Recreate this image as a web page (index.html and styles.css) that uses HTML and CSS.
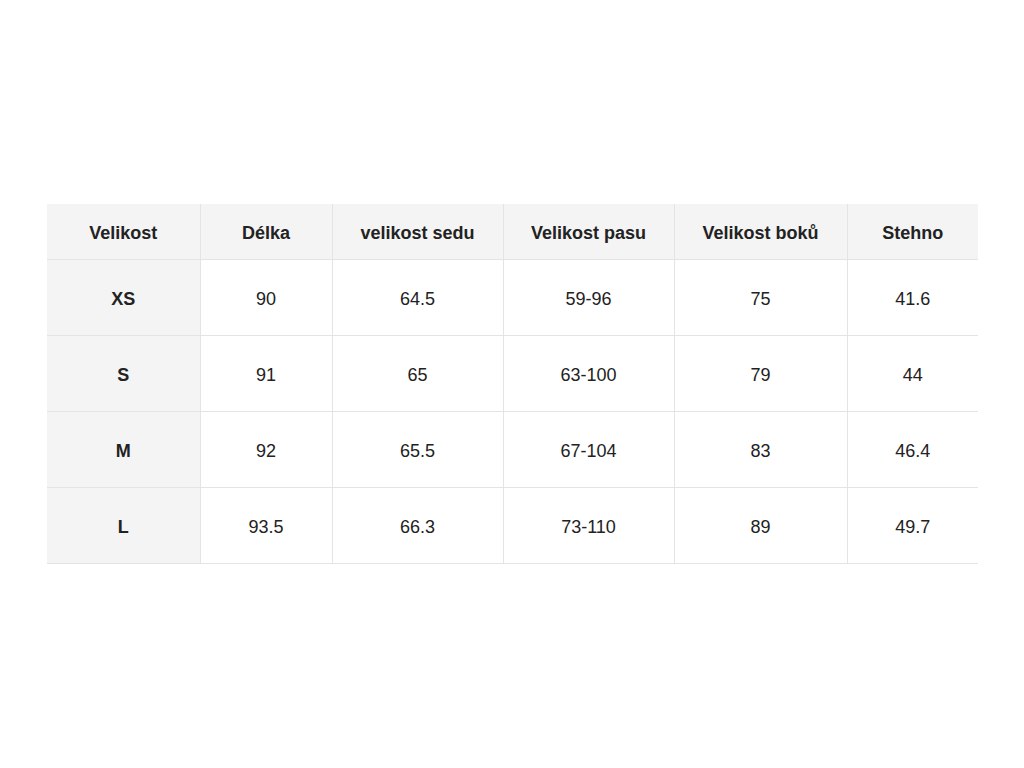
FILE: index.html
```html
<!DOCTYPE html>
<html lang="cs">
<head>
<meta charset="utf-8">
<title>Tabulka velikostí</title>
<link rel="stylesheet" href="styles.css">
</head>
<body>
<main class="page">
  <table class="sizes">
    <colgroup>
      <col class="c1"><col class="c2"><col class="c3"><col class="c4"><col class="c5"><col class="c6">
    </colgroup>
    <thead>
      <tr class="head-row">
        <th>Velikost</th><th>Délka</th><th>velikost sedu</th><th>Velikost pasu</th><th>Velikost boků</th><th>Stehno</th>
      </tr>
    </thead>
    <tbody>
      <tr class="body-row"><th>XS</th><td>90</td><td>64.5</td><td>59-96</td><td>75</td><td>41.6</td></tr>
      <tr class="body-row"><th>S</th><td>91</td><td>65</td><td>63-100</td><td>79</td><td>44</td></tr>
      <tr class="body-row"><th>M</th><td>92</td><td>65.5</td><td>67-104</td><td>83</td><td>46.4</td></tr>
      <tr class="body-row"><th>L</th><td>93.5</td><td>66.3</td><td>73-110</td><td>89</td><td>49.7</td></tr>
    </tbody>
  </table>
</main>
</body>
</html>
```
FILE: styles.css
```css
html, body {
  margin: 0;
  padding: 0;
  background: #ffffff;
}
body {
  font-family: "Liberation Sans", Arial, sans-serif;
  color: #222222;
}
.page {
  height: 768px;
  display: flex;
  align-items: center;
  justify-content: center;
}
.sizes {
  width: 931px;
  border-collapse: collapse;
  table-layout: fixed;
  font-size: 18px;
  margin-left: 1px;
}
.c1 { width: 153px; }
.c2 { width: 132px; }
.c3 { width: 171px; }
.c4 { width: 171px; }
.c5 { width: 173px; }
.c6 { width: 131px; }
.sizes th, .sizes td {
  text-align: center;
  vertical-align: middle;
  padding: 2px 0 0;
  border-bottom: 1px solid #e4e4e4;
  border-left: 1px solid #e4e4e4;
}
.sizes tr > :first-child {
  border-left: none;
}
.head-row {
  height: 56px;
}
.head-row th {
  padding-top: 3px;
  background: #f4f4f4;
  font-weight: bold;
}
.body-row {
  height: 76px;
}
.sizes tbody th {
  padding-top: 3px;
  background: #f4f4f4;
  font-weight: bold;
}
.sizes td {
  padding-top: 3px;
  font-weight: normal;
}
```
